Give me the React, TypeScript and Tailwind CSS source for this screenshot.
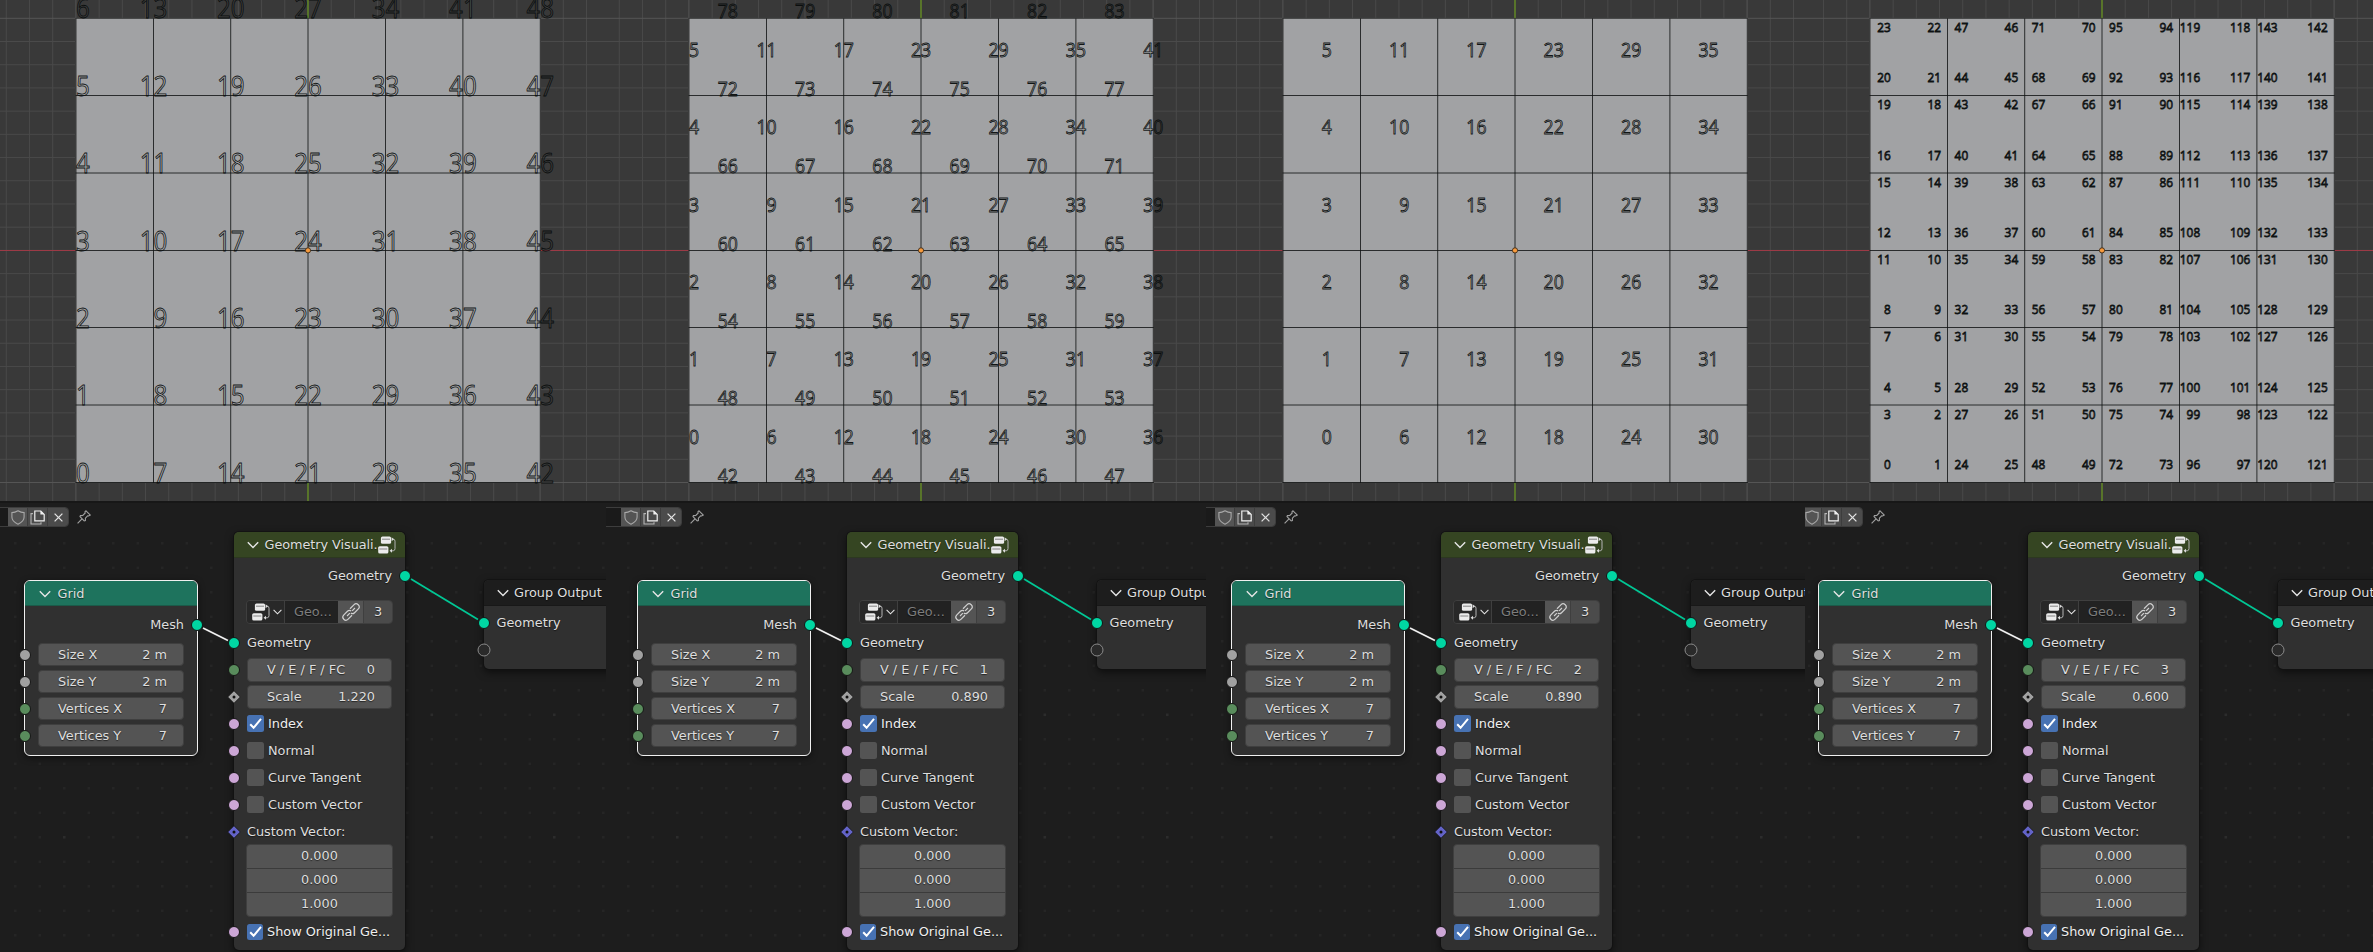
import React from "react";

type Label = { x: number; y: number; text: string };
type PanelData = {
  frame: string;
  shift: string;
  origin: number;
  scale: number;
  domain: string;
  scaleText: string;
  labels: Label[];
};

const COLS = [76.1, 153.5, 230.7, 308, 385.5, 462.9, 540.2];
const ROWS = [482.5, 405, 327.5, 250.5, 173, 95.5, 18.4];
const STEP = 77.35;
const CENTER_X = 308;
const CENTER_Y = 250.4;

function vertexLabels(): Label[] {
  const out: Label[] = [];
  for (let c = 0; c < 7; c++)
    for (let r = 0; r < 7; r++) out.push({ x: COLS[c], y: ROWS[r], text: String(c * 7 + r) });
  return out;
}

function edgeLabels(): Label[] {
  const out: Label[] = [];
  for (let c = 0; c < 7; c++)
    for (let r = 0; r < 6; r++) out.push({ x: COLS[c], y: ROWS[r] - STEP / 2, text: String(c * 6 + r) });
  for (let r = 0; r < 7; r++)
    for (let c = 0; c < 6; c++) out.push({ x: COLS[c] + STEP / 2, y: ROWS[r], text: String(42 + r * 6 + c) });
  return out;
}

function faceLabels(): Label[] {
  const out: Label[] = [];
  for (let c = 0; c < 6; c++)
    for (let r = 0; r < 6; r++)
      out.push({ x: COLS[c] + STEP / 2, y: ROWS[r] - STEP / 2, text: String(c * 6 + r) });
  return out;
}

function cornerLabels(): Label[] {
  const out: Label[] = [];
  for (let c = 0; c < 6; c++)
    for (let r = 0; r < 6; r++) {
      const n = (c * 6 + r) * 4;
      const l = COLS[c] + 13.9;
      const rt = COLS[c + 1] - 13.3;
      const b = ROWS[r] - 13.4;
      const t = ROWS[r + 1] + 13.8;
      out.push({ x: l, y: b, text: String(n) });
      out.push({ x: rt, y: b, text: String(n + 1) });
      out.push({ x: rt, y: t, text: String(n + 2) });
      out.push({ x: l, y: t, text: String(n + 3) });
    }
  return out;
}

const PANELS: PanelData[] = [
  { frame: "w-[606px]", shift: "ml-0", origin: 0, scale: 1.22, domain: "0", scaleText: "1.220", labels: vertexLabels() },
  { frame: "w-[600px]", shift: "ml-[7px]", origin: 7, scale: 0.89, domain: "1", scaleText: "0.890", labels: edgeLabels() },
  { frame: "w-[599px]", shift: "ml-[1px]", origin: 1, scale: 0.89, domain: "2", scaleText: "0.890", labels: faceLabels() },
  { frame: "w-[568px]", shift: "-ml-[11px]", origin: -11, scale: 0.6, domain: "3", scaleText: "0.600", labels: cornerLabels() },
];

const range = (a: number, b: number) => Array.from({ length: b - a + 1 }, (_, i) => a + i);

function Viewport({ panel }: { panel: PanelData }) {
  const digit = 11.32 * panel.scale;
  const size = 22 * panel.scale;
  const dense = panel.scale < 0.7;
  return (
    <svg className="block h-[501px] w-full shrink-0 bg-[#393939] [text-shadow:none]" preserveAspectRatio="none">
      <g transform={`translate(${panel.origin} 0)`}>
        {range(-14, 14).map((i) => (
          <line key={"v" + i} x1={CENTER_X + i * 23.21} x2={CENTER_X + i * 23.21} y1={0} y2={501} stroke={i % 10 === 0 ? "#555555" : "#4a4a4a"} strokeWidth={1} />
        ))}
        {range(-10, 10).map((i) => (
          <line key={"h" + i} x1={-20} x2={640} y1={CENTER_Y + i * 23.21} y2={CENTER_Y + i * 23.21} stroke={i % 10 === 0 ? "#555555" : "#4a4a4a"} strokeWidth={1} />
        ))}
        <line x1={-20} x2={640} y1={250.5} y2={250.5} stroke="#9c3a46" strokeWidth={1.2} />
        <line x1={308} x2={308} y1={0} y2={501} stroke="#5d8124" strokeWidth={1.6} />
        <rect x={COLS[0]} y={ROWS[6]} width={COLS[6] - COLS[0]} height={ROWS[0] - ROWS[6]} fill="#a1a2a4" />
        {COLS.map((x, i) => (
          <line key={"c" + i} x1={x} x2={x} y1={ROWS[6]} y2={ROWS[0] + 0.5} stroke="#101212" strokeOpacity={i === 0 || i === 6 ? 0.55 : 0.82} strokeWidth={1} />
        ))}
        {ROWS.map((y, i) => (
          <line key={"r" + i} x1={COLS[0] - 0.5} x2={COLS[6] + 0.5} y1={y} y2={y} stroke="#101212" strokeOpacity={i === 6 ? 0.55 : 0.82} strokeWidth={1} />
        ))}
        <g
          fill={dense ? "#101414" : "none"}
          fillOpacity={0.35}
          stroke="#080c0c"
          strokeOpacity={0.95}
          strokeWidth={0.85}
          fontFamily="'Open Sans', 'Noto Sans', sans-serif"
          fontSize={size}
          textAnchor="end"
        >
          {panel.labels.map((l, i) => (
            <text key={i} transform={`translate(${(l.x + digit).toFixed(2)} ${l.y.toFixed(2)}) scale(0.9 1)`}>
              {l.text}
            </text>
          ))}
        </g>
        <circle cx={308} cy={250.4} r={2.6} fill="#f79a3c" stroke="#3a2a1a" strokeWidth={0.9} />
      </g>
    </svg>
  );
}

function Chevron({ className }: { className: string }) {
  return (
    <svg className={className} viewBox="0 0 12 8" fill="none" stroke="#e6e6e6" strokeWidth={1.4}>
      <path d="M0.8 1.2 6 6.4 11.2 1.2" />
    </svg>
  );
}

function NodeTreeIcon({ className }: { className: string }) {
  return (
    <svg className={className} viewBox="0 0 18 18">
      <rect x={2.9} y={0.4} width={10.2} height={7.4} rx={1.6} fill="#ececec" />
      <rect x={0.2} y={10.2} width={10.2} height={7.4} rx={1.6} fill="#ececec" />
      <path d="M4 3.2h8M1.3 13h8" stroke="#6b6b6b" strokeWidth={0.8} />
      <path d="M14.4 3.2h0.8q1.8 0 1.8 2v7.4q0 2-1.8 2.2h-2.2" fill="none" stroke="#b5b5b5" strokeWidth={1} />
      <path d="M13.6 1.2 16 3.2 13.6 5.2ZM14 12.8 11.6 14.8 14 16.8Z" fill="#dcdcdc" />
    </svg>
  );
}

function LinkIcon() {
  return (
    <svg className="h-[18px] w-[18px]" viewBox="0 0 18 18" fill="none" stroke="#d0d0d0" strokeWidth={1.2}>
      <g transform="rotate(-45 9 9)">
        <path d="M7.4 12H1.6Q-1.2 12-1.2 9T1.6 6H7Q9.6 6 9.8 8.4" />
        <path d="M10.6 6h5.8Q19.2 6 19.2 9T16.4 12H11Q8.4 12 8.2 9.6" />
        <path d="M3.4 9h4M10.6 9h4" strokeWidth={1.2} />
      </g>
    </svg>
  );
}

const CIRCLE = "absolute size-[12px] -translate-x-1/2 -translate-y-1/2 top-1/2 rounded-full border border-[#151515]";

function Socket({ color, side = "left-0" }: { color: string; side?: string }) {
  return <span className={`${CIRCLE} ${side} ${color}`} />;
}

function Diamond({ color }: { color: string }) {
  return (
    <svg className="absolute top-1/2 left-0 size-[14px] -translate-x-1/2 -translate-y-1/2" viewBox="0 0 14 14">
      <path d="M7 0.7 13.3 7 7 13.3 0.7 7Z" fill={color} stroke="#151515" strokeWidth={0.8} />
      <circle cx={7} cy={7} r={1.5} fill="#111" />
    </svg>
  );
}

function Field({ label, value, height = "h-[24px]" }: { label: string; value: string; height?: string }) {
  return (
    <div className={`flex ${height} w-full items-center justify-between rounded-[4px] border border-[#3f3f3f] bg-[#545454] pr-[16px] pl-[19px]`}>
      <span>{label}</span>
      <span>{value}</span>
    </div>
  );
}

function Row({ children, className = "" }: { children: React.ReactNode; className?: string }) {
  return <div className={`relative flex h-[27px] items-center px-[13px] ${className}`}>{children}</div>;
}

function Check({ label, on, tight }: { label: string; on?: boolean; tight?: boolean }) {
  return (
    <Row>
      <Socket color="bg-[#cca6d6]" />
      <span className={`flex ${tight ? "size-[16px]" : "size-[17px]"} shrink-0 items-center justify-center rounded-[2.5px] ${on ? "bg-[#4772b3]" : "bg-[#545454]"}`}>
        {on && (
          <svg className="size-[13px]" viewBox="0 0 13 13" fill="none" stroke="#fff" strokeWidth={2}>
            <path d="M1.2 7.2 4.6 10.8 12 1.8" />
          </svg>
        )}
      </span>
      <span className={`ml-[4px] whitespace-nowrap ${on ? "text-[#efefef]" : ""}`}>{label}</span>
    </Row>
  );
}

function GridNode() {
  return (
    <div className="absolute top-[79px] left-[24px] h-[176px] w-[174px] rounded-[6px] border border-[#f0f0f0] bg-[#303030] shadow-[0_2px_6px_rgba(0,0,0,0.5)]">
      <div className="flex h-[25px] items-center rounded-t-[5px] border-b border-[#1b5a49] bg-[#1e735d] pt-[1px] pl-[14px]">
        <Chevron className="h-[8px] w-[12px]" />
        <span className="ml-[6.5px]">Grid</span>
      </div>
      <div className="relative mt-[5px] flex h-[27px] items-center justify-end pr-[13px]">
        <span>Mesh</span>
        <Socket color="bg-[#00d6a3]" side="left-full" />
      </div>
      <div className="mt-[3px]">
        {[
          ["Size X", "2 m", "bg-[#a1a1a1]"],
          ["Size Y", "2 m", "bg-[#a1a1a1]"],
          ["Vertices X", "7", "bg-[#598c5c]"],
          ["Vertices Y", "7", "bg-[#598c5c]"],
        ].map(([l, v, c]) => (
          <Row key={l}>
            <Socket color={c} />
            <Field label={l} value={v} height="h-[23px]" />
          </Row>
        ))}
      </div>
    </div>
  );
}

function VisualizerNode({ panel }: { panel: PanelData }) {
  return (
    <div className="absolute top-[31px] left-[234px] h-[418px] w-[171px] rounded-[5px] bg-[#303030] shadow-[0_0_0_1px_rgba(18,18,18,0.8),0_3px_8px_rgba(0,0,0,0.6)]">
      <div className="flex h-[26px] items-center rounded-t-[5px] border-b border-[#2c3820] bg-[#354522] pl-[13px]">
        <Chevron className="h-[8px] w-[12px] shrink-0" />
        <span className="ml-[5.5px] w-[113.5px] shrink-0 tracking-[-0.06px] whitespace-nowrap">Geometry Visuali..</span>
        <NodeTreeIcon className="h-[18px] w-[18px] shrink-0" />
      </div>
      <Row className="mt-[4px] justify-end">
        <span>Geometry</span>
        <Socket color="bg-[#00d6a3]" side="left-full" />
      </Row>
      <div className="mx-[12px] mt-[11px] flex h-[24px] w-[147px] overflow-hidden rounded-[4px] border border-[#3f3f3f]">
        <div className="flex w-[37px] items-center bg-[#282828] pl-[5px]">
          <NodeTreeIcon className="h-[18px] w-[18px]" />
          <Chevron className="ml-[3px] h-[6px] w-[9px]" />
        </div>
        <div className="flex w-[54px] items-center border-l border-[#3f3f3f] bg-[#222222] pl-[9px] text-[#7d7d7d]">Geo...</div>
        <div className="flex w-[25px] items-center justify-center bg-[#545454]">
          <LinkIcon />
        </div>
        <div className="flex flex-1 items-center justify-center border-l border-[#3f3f3f] bg-[#4b4b4b]">3</div>
      </div>
      <Row className="mt-[5px]">
        <Socket color="bg-[#00d6a3]" />
        <span>Geometry</span>
      </Row>
      <Row>
        <Socket color="bg-[#598c5c]" />
        <Field label="V / E / F / FC" value={panel.domain} />
      </Row>
      <Row>
        <Diamond color="#a1a1a1" />
        <Field label="Scale" value={panel.scaleText} />
      </Row>
      <Check label="Index" on />
      <Check label="Normal" />
      <Check label="Curve Tangent" />
      <Check label="Custom Vector" />
      <Row>
        <Diamond color="#6363c7" />
        <span>Custom Vector:</span>
      </Row>
      <div className="mx-[12px] -mt-px flex h-[73px] flex-col divide-y divide-[#3b3b3b] rounded-[4px] border border-[#3f3f3f] bg-[#545454]">
        {["0.000", "0.000", "1.000"].map((v, i) => (
          <div key={i} className="flex flex-1 items-center justify-center pb-[2px]">
            {v}
          </div>
        ))}
      </div>
      <div className="mt-px">
        <Check label="Show Original Ge..." on tight />
      </div>
    </div>
  );
}

function OutputNode() {
  return (
    <div className="absolute top-[79px] left-[483.5px] h-[89px] w-[171px] rounded-[5px] bg-[#303030] shadow-[0_0_0_1px_rgba(18,18,18,0.8),0_3px_8px_rgba(0,0,0,0.6)]">
      <div className="flex h-[26px] items-center rounded-t-[5px] border-b border-[#181818] bg-[#1d1d1d] pl-[13px]">
        <Chevron className="h-[8px] w-[12px]" />
        <span className="ml-[5.5px] whitespace-nowrap">Group Output</span>
      </div>
      <Row className="mt-[3px]">
        <Socket color="bg-[#00d6a3]" />
        <span>Geometry</span>
      </Row>
      <Row>
        <span className="absolute top-1/2 left-0 size-[13px] -translate-x-1/2 -translate-y-1/2 rounded-full border-[1.4px] border-[#8a8a8a] bg-[#2a2a2a]" />
      </Row>
    </div>
  );
}

function EditorHeader() {
  return (
    <div className="absolute top-[6px] -left-[40px] flex items-center">
      <div className="flex h-[20px] overflow-hidden rounded-r-[4px] border border-[#3d3d3d]">
        <div className="w-[47px] bg-[#1a1a1a]" />
        <div className="flex w-[20px] items-center justify-center border-r border-[#3d3d3d] bg-[#545454]">
          <svg className="h-[15px] w-[14px]" viewBox="0 0 14 15" fill="none" stroke="#a8a8a8" strokeWidth={1.1}>
            <path d="M7 0.8Q10 2.6 13.1 2.6V7Q13.1 11.4 7 14.2Q0.9 11.4 0.9 7V2.6Q4 2.6 7 0.8Z" />
          </svg>
        </div>
        <div className="flex w-[20px] items-center justify-center border-r border-[#3d3d3d] bg-[#4b4b4b]">
          <svg className="h-[15px] w-[15px]" viewBox="0 0 15 15" fill="none" strokeWidth={1.1}>
            <path d="M3 3.6H1V14h10v-1.8" stroke="#b5b5b5" />
            <path d="M4.8 1h6l3.4 3.4v6.4H4.8Z" stroke="#f0f0f0" strokeWidth={1.2} />
            <path d="M10.4 0.8 14.4 4.6H10.4Z" fill="#f0f0f0" />
          </svg>
        </div>
        <div className="flex w-[20px] items-center justify-center bg-[#4b4b4b]">
          <svg className="h-[9px] w-[9px]" viewBox="0 0 9 9" stroke="#e0e0e0" strokeWidth={1.3}>
            <path d="M0.6 0.6 8.4 8.4M8.4 0.6 0.6 8.4" />
          </svg>
        </div>
      </div>
      <svg className="ml-[8px] h-[14px] w-[14px]" viewBox="0 0 14 14" fill="none" stroke="#a0a0a0" strokeWidth={1.1}>
        <path d="M9 0.8 13.3 5 11.6 6 10.6 5.8 8.4 8.2 8.4 10.6 7.2 10.8 3 6.6 3.4 5.6 5.8 5.4 8.2 3 7.9 1.9Z" />
        <path d="M5 8.8 0.6 13.4" />
      </svg>
    </div>
  );
}

function Links() {
  return (
    <svg className="absolute top-0 left-0 h-[449px] w-[640px]" fill="none">
      {range(-1, 26).map((i) =>
        range(0, 16).map((j) => (
          <rect
            key={i + "-" + j}
            x={14 + i * 24.5}
            y={41 + j * 24.5}
            width={2.6}
            height={2.6}
            fill={(i + 98) % 5 === 0 && (j + 3) % 5 === 0 ? "#2c2c2c" : "#252525"}
          />
        )),
      )}
      <path d="M203 127 228 139.5" stroke="#f0f0f0" strokeWidth={1.8} />
      <path d="M411 78 478 118.5" stroke="#00c795" strokeWidth={1.8} />
    </svg>
  );
}

function Panel({ panel }: { panel: PanelData }) {
  return (
    <section className={`flex h-[952px] shrink-0 flex-col overflow-hidden ${panel.frame}`}>
      <Viewport panel={panel} />
      <div className="h-[451px] overflow-hidden border-t-2 border-[#171717] bg-[#1d1d1d]">
        <div className={`relative h-[449px] w-[640px] -mt-[2px] ${panel.shift}`}>
          <Links />
          <EditorHeader />
          <GridNode />
          <VisualizerNode panel={panel} />
          <OutputNode />
        </div>
      </div>
    </section>
  );
}

export default function App() {
  return (
    <main className="flex h-[952px] w-[2373px] overflow-hidden bg-[#1d1d1d] font-['DejaVu_Sans',sans-serif] text-[12.85px] leading-[16px] text-[#dedede] [text-shadow:0_1px_1px_rgba(0,0,0,0.55)]">
      {PANELS.map((p) => (
        <Panel key={p.domain} panel={p} />
      ))}
    </main>
  );
}
